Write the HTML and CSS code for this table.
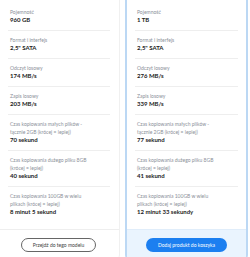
FILE: index.html
```html
<!DOCTYPE html>
<html lang="pl">
<head>
  <meta charset="UTF-8">
  <meta name="viewport" content="width=device-width, initial-scale=1.0">
  <title>Porównanie dysków</title>
  <link rel="stylesheet" href="styles.css">
</head>
<body>
  <div class="compare">
    <div class="card">
      <div class="specs">
        <div class="spec"><div class="label">Pojemność</div><div class="value">960 GB</div></div>
        <div class="spec"><div class="label">Format i interfejs</div><div class="value">2,5" SATA</div></div>
        <div class="spec"><div class="label">Odczyt losowy</div><div class="value">174 MB/s</div></div>
        <div class="spec"><div class="label">Zapis losowy</div><div class="value">203 MB/s</div></div>
        <div class="spec"><div class="label">Czas kopiowania małych plików -<br>łącznie 2GB (krócej = lepiej)</div><div class="value">70 sekund</div></div>
        <div class="spec"><div class="label">Czas kopiowania dużego pliku 8GB<br>(krócej = lepiej)</div><div class="value">40 sekund</div></div>
        <div class="spec"><div class="label">Czas kopiowania 100GB w wielu<br>plikach (krócej = lepiej)</div><div class="value">8 minut 5 sekund</div></div>
      </div>
      <div class="card-footer">
        <button class="btn btn-outline">Przejdź do tego modelu</button>
      </div>
    </div>
    <div class="card card-active">
      <div class="specs">
        <div class="spec"><div class="label">Pojemność</div><div class="value">1 TB</div></div>
        <div class="spec"><div class="label">Format i interfejs</div><div class="value">2,5" SATA</div></div>
        <div class="spec"><div class="label">Odczyt losowy</div><div class="value">276 MB/s</div></div>
        <div class="spec"><div class="label">Zapis losowy</div><div class="value">339 MB/s</div></div>
        <div class="spec"><div class="label">Czas kopiowania małych plików -<br>łącznie 2GB (krócej = lepiej)</div><div class="value">77 sekund</div></div>
        <div class="spec"><div class="label">Czas kopiowania dużego pliku 8GB<br>(krócej = lepiej)</div><div class="value">41 sekund</div></div>
        <div class="spec"><div class="label">Czas kopiowania 100GB w wielu<br>plikach (krócej = lepiej)</div><div class="value">12 minut 33 sekundy</div></div>
      </div>
      <div class="card-footer">
        <button class="btn btn-primary">Dodaj produkt do koszyka</button>
      </div>
    </div>
  </div>
</body>
</html>
```

FILE: styles.css
```css
body {
  margin: 0;
  padding: 0;
  background-color: #fff;
  font-family: Lato, "Open Sans", sans-serif;
  color: #222;
  overflow: hidden;
}
.compare {
  display: flex;
  gap: 5px;
  margin-top: -8px;
  margin-left: -3px;
}
.card {
  width: 123px;
  box-sizing: border-box;
  border: 1px solid #f0f0f0;
  border-radius: 0 0 5px 5px;
  background-color: #fff;
  display: flex;
  flex-direction: column;
  overflow: hidden;
}
.card-active {
  border: 2px solid #bcd8f4;
}
.specs {
  padding: 10px 9px 7px 10px;
}
.card-active .specs {
  padding: 9px 8px 7px 8px;
}
.spec {
  padding: 5px 2px 6px;
  border-bottom: 1px solid #eeeeee;
}
.spec:last-child {
  border-bottom: none;
}
.label {
  font-size: 5px;
  line-height: 8px;
  color: #8b9099;
}
.value {
  font-size: 6px;
  line-height: 8px;
  font-weight: bold;
  color: #222;
}
.card-footer {
  border-top: 1px solid #eeeeee;
  padding: 8px 0 6px;
  display: flex;
  justify-content: center;
}
.card-active .card-footer {
  background-color: #eaf4fe;
  border-top-color: #e0edfa;
}
.btn {
  font-family: Lato, "Open Sans", sans-serif;
  font-size: 5px;
  height: 14px;
  border-radius: 7px;
  cursor: pointer;
  padding: 0;
}
.btn-outline {
  width: 75px;
  background-color: #fff;
  border: 1px solid #666;
  color: #444;
}
.btn-primary {
  width: 81px;
  background-color: #1c7ff0;
  border: none;
  color: #fff;
}
```
